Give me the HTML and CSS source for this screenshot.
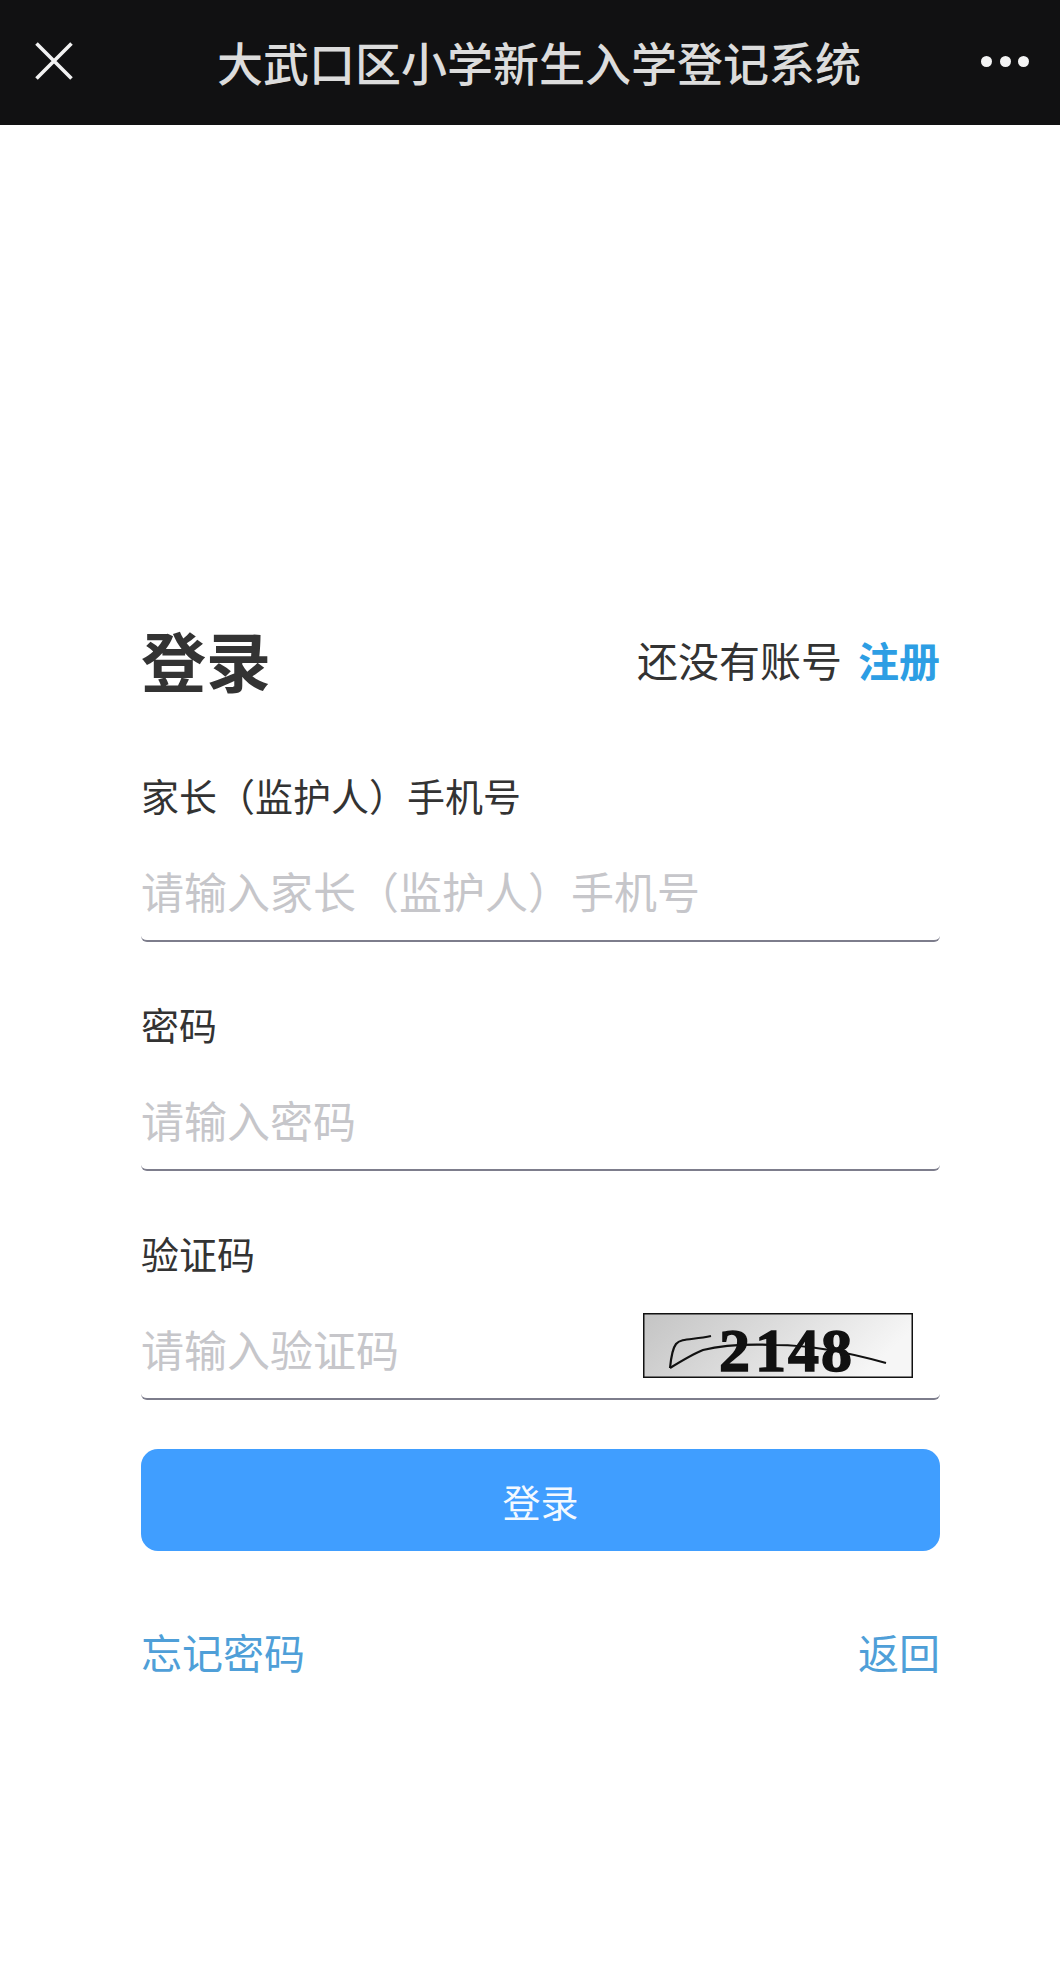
FILE: index.html
```html
<!DOCTYPE html>
<html lang="zh-CN">
<head>
<meta charset="utf-8">
<title>大武口区小学新生入学登记系统</title>
<link rel="stylesheet" href="styles.css">
</head>
<body>
<header class="navbar">
  <svg class="nav-close" viewBox="0 0 38 38" aria-label="关闭"><path d="M1.5 1.5 36.5 36.5M36.5 1.5 1.5 36.5"/></svg>
  <div class="nav-title">大武口区小学新生入学登记系统</div>
  <div class="nav-more"><span></span><span></span><span></span></div>
</header>
<main class="page">
  <div class="head-row">
    <h1 class="head-title">登录</h1>
    <div class="head-side">还没有账号<a class="head-link">注册</a></div>
  </div>
  <form class="form">
    <div class="field">
      <label class="field-label">家长（监护人）手机号</label>
      <div class="control"><input class="control-input" placeholder="请输入家长（监护人）手机号"></div>
    </div>
    <div class="field">
      <label class="field-label">密码</label>
      <div class="control"><input class="control-input" placeholder="请输入密码"></div>
    </div>
    <div class="field">
      <label class="field-label">验证码</label>
      <div class="control control-captcha">
        <input class="control-input" placeholder="请输入验证码">
        <svg class="captcha" viewBox="0 0 270 65">
          <defs>
            <linearGradient id="cg" x1="0" y1="0" x2="1" y2="0.25">
              <stop offset="0" stop-color="#c4c4c4"/>
              <stop offset="0.5" stop-color="#dcdcdc"/>
              <stop offset="1" stop-color="#f6f6f6"/>
            </linearGradient>
          </defs>
          <rect x="0.75" y="0.75" width="268.5" height="63.5" fill="url(#cg)" stroke="#111" stroke-width="1.5"/>
          <text class="captcha-text" x="76 112 145 178" y="58">2148</text>
          <path class="captcha-line" d="M27 55C28 45 29 36 33 31 38 25 50 27 68 23"/>
          <path class="captcha-line" d="M27 55C40 47 50 41 60 37 80 32 110 31 133 32 160 32 200 38 243 50"/>
        </svg>
      </div>
    </div>
    <button class="submit" type="button">登录</button>
  </form>
  <div class="foot-row">
    <a class="foot-link">忘记密码</a>
    <a class="foot-link">返回</a>
  </div>
</main>
</body>
</html>
```
FILE: styles.css
```css
* { box-sizing: border-box; }
html, body { margin: 0; padding: 0; background: #fff; }
body {
  font-family: "Noto Sans CJK SC", "Liberation Sans", sans-serif;
  color: #333;
  height: 1966px;
  overflow: hidden;
}
.navbar {
  height: 125px;
  background: #111112;
  display: flex;
  align-items: center;
  padding: 0 31px 3px 35px;
}
.nav-close {
  width: 38px;
  height: 38px;
  flex: none;
  fill: none;
  stroke: #f2f2f2;
  stroke-width: 3.6;
}
.nav-title {
  flex: 1;
  text-align: center;
  padding-left: 24px;
  font-size: 46px;
  line-height: 60px;
  font-weight: 500;
  color: #dcdcdc;
  white-space: nowrap;
}
.nav-more {
  flex: none;
  width: 48px;
  display: flex;
  justify-content: space-between;
}
.nav-more span {
  width: 11px;
  height: 11px;
  border-radius: 50%;
  background: #f4f4f4;
}
.page { padding: 499px 120px 0 141px; }
.head-row {
  height: 70px;
  display: flex;
  justify-content: space-between;
  align-items: center;
}
.head-title {
  margin: 0;
  font-size: 65px;
  line-height: 70px;
  font-weight: 700;
  color: #333;
}
.head-side {
  font-size: 41px;
  line-height: 50px;
  color: #333;
  white-space: nowrap;
}
.head-link {
  margin-left: 16px;
  font-weight: 700;
  color: #2d9ee4;
}
.form { margin-top: 76px; }
.field { margin-bottom: 57px; }
.field:last-of-type { margin-bottom: 49px; }
.field-label {
  display: block;
  font-size: 38px;
  line-height: 50px;
  color: #333;
}
.control {
  margin-top: 19px;
  height: 103px;
  border-bottom: 2px solid #7d7d8c;
  border-radius: 0 0 6px 6px;
  display: flex;
  align-items: center;
}
.control-captcha { padding-right: 27px; }
.control-input {
  flex: 1;
  min-width: 0;
  border: 0;
  outline: 0;
  padding: 0;
  background: transparent;
  font-family: inherit;
  font-size: 43px;
  line-height: 60px;
  height: 60px;
  color: #333;
}
.control-input::placeholder { color: #c6c6ca; opacity: 1; }
.captcha {
  flex: none;
  width: 270px;
  height: 65px;
  margin-top: -4px;
}
.captcha-text {
  font-family: "Liberation Serif", serif;
  font-weight: 700;
  font-size: 62px;
  fill: #111;
  stroke: #111;
  stroke-width: 1.5;
}
.captcha-line {
  fill: none;
  stroke: #111;
  stroke-width: 2.2;
}
.submit {
  display: block;
  width: 100%;
  height: 102px;
  border: 0;
  border-radius: 17px;
  background: #409eff;
  color: #f4f9ff;
  font-family: inherit;
  font-size: 38px;
}
.foot-row {
  margin-top: 75px;
  display: flex;
  justify-content: space-between;
}
.foot-link {
  font-size: 41px;
  line-height: 50px;
  color: #4f9fd8;
}
```
